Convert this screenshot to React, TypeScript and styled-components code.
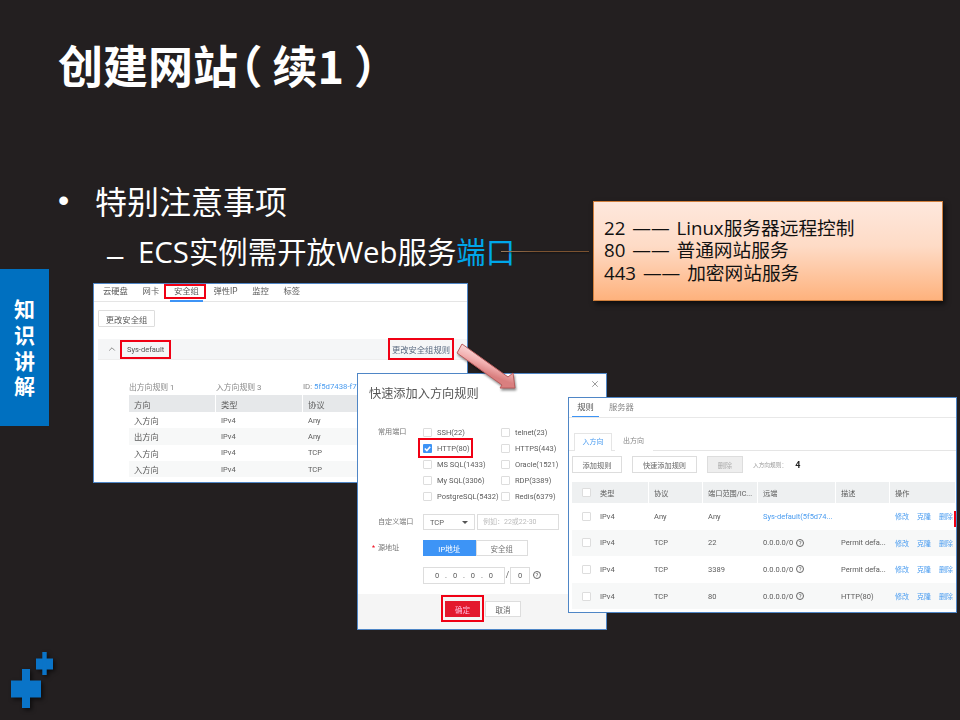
import styled, { createGlobalStyle } from "styled-components";
import { ChevronUp, X } from "lucide-react";

const GlobalStyle = createGlobalStyle`
  html, body {
    margin: 0;
    padding: 0;
    background: #231f20;
  }
`;

const ui = `"Roboto", "Noto Sans CJK SC", sans-serif`;
const red = "#f00014";

const tabsOne = ["云硬盘", "网卡", "安全组", "弹性IP", "监控", "标签"];
const rulesOne = [
  ["入方向", "IPv4", "Any"],
  ["出方向", "IPv4", "Any"],
  ["入方向", "IPv4", "TCP"],
  ["入方向", "IPv4", "TCP"],
];
const ports = [
  ["SSH(22)", "telnet(23)"],
  ["HTTP(80)", "HTTPS(443)"],
  ["MS SQL(1433)", "Oracle(1521)"],
  ["My SQL(3306)", "RDP(3389)"],
  ["PostgreSQL(5432)", "Redis(6379)"],
];
const rulesTwo = [
  { proto: "Any", port: "Any", remote: "Sys-default(5f5d74...", desc: "" },
  { proto: "TCP", port: "22", remote: "0.0.0.0/0", desc: "Permit defa..." },
  { proto: "TCP", port: "3389", remote: "0.0.0.0/0", desc: "Permit defa..." },
  { proto: "TCP", port: "80", remote: "0.0.0.0/0", desc: "HTTP(80)" },
];

const App = () => {
  return (
    <Stage>
      <GlobalStyle />
      <Title>
        创建网站<OpenParen>（</OpenParen>续1<CloseParen>）</CloseParen>
      </Title>
      <Bullet>特别注意事项</Bullet>
      <SubBullet>
        ECS实例需开放Web服务<Accent>端口</Accent>
      </SubBullet>

      <SideTab>知识讲解</SideTab>

      <Connector />
      <Callout>
        <div>22 —— Linux服务器远程控制</div>
        <div>80 —— 普通网站服务</div>
        <div>443 —— 加密网站服务</div>
      </Callout>

      <WindowOne>
        <TabBarOne>
          {tabsOne.map((tab) => (
            <TabOne key={tab} $active={tab === "安全组"}>
              {tab}
            </TabOne>
          ))}
        </TabBarOne>
        <ChangeButton>更改安全组</ChangeButton>
        <GroupHead>
          <ChevronUp size={10} color="#777" />
          <GroupName>Sys-default</GroupName>
          <GroupLink>更改安全组规则</GroupLink>
        </GroupHead>
        <Stats>
          <span>出方向规则 1</span>
          <span>入方向规则 3</span>
          <span>
            ID: <LinkText>5f5d7438-f7e</LinkText>
          </span>
        </Stats>
        <TableOne>
          <HeadCell>方向</HeadCell>
          <HeadCell>类型</HeadCell>
          <HeadCell>协议</HeadCell>
          {rulesOne.map((row, i) =>
            row.map((cell, j) => (
              <BodyCell key={`${i}-${j}`} $alt={i % 2 === 1} $latin={j > 0}>
                {cell}
              </BodyCell>
            ))
          )}
        </TableOne>
      </WindowOne>

      <Arrow viewBox="0 0 64 50" width="64" height="50">
        <defs>
          <linearGradient id="arrowFill" x1="0.55" y1="0.2" x2="0.35" y2="0.6">
            <stop offset="0" stopColor="#fbdede" />
            <stop offset="0.55" stopColor="#f2b0b0" />
            <stop offset="1" stopColor="#d97f7f" />
          </linearGradient>
        </defs>
        <polygon
          points="7,1 2,10 47,42 45,45 60,45 58,30 53,34"
          fill="url(#arrowFill)"
          stroke="#b85c5c"
          strokeWidth="1"
        />
      </Arrow>

      <WindowTwo>
        <DialogTitle>快速添加入方向规则</DialogTitle>
        <CloseIcon>
          <X size={10} color="#888" />
        </CloseIcon>
        <PortGroup>
          <FormLabel>常用端口</FormLabel>
          <PortGrid>
            {ports.flat().map((port) => (
              <PortItem key={port} $marked={port === "HTTP(80)"}>
                <CheckBox $checked={port === "HTTP(80)"}>
                  {port === "HTTP(80)" && (
                    <svg viewBox="0 0 10 10" width="9" height="9">
                      <path d="M2 5 L4.3 7.2 L8 3" fill="none" stroke="#fff" strokeWidth="1.8" />
                    </svg>
                  )}
                </CheckBox>
                {port}
              </PortItem>
            ))}
          </PortGrid>
        </PortGroup>
        <FormRow $top={10}>
          <FormLabel>自定义端口</FormLabel>
          <SelectBox>
            TCP
            <Caret />
          </SelectBox>
          <HintInput>例如：22或22-30</HintInput>
        </FormRow>
        <FormRow $top={10}>
          <FormLabel $required>源地址</FormLabel>
          <Segment $on>IP地址</Segment>
          <Segment>安全组</Segment>
        </FormRow>
        <FormRow $top={11}>
          <FormLabel />
          <IpBox>0 . 0 . 0 . 0</IpBox>
          <Slash>/</Slash>
          <MaskBox>0</MaskBox>
          <Help>?</Help>
        </FormRow>
        <DialogFooter>
          <ConfirmMark>
            <ConfirmButton>确定</ConfirmButton>
          </ConfirmMark>
          <CancelButton>取消</CancelButton>
        </DialogFooter>
      </WindowTwo>

      <WindowThree>
        <TabBarThree>
          <TabThree $active>规则</TabThree>
          <TabThree>服务器</TabThree>
        </TabBarThree>
        <SubTabs>
          <SubTab $active>入方向</SubTab>
          <SubTab>出方向</SubTab>
        </SubTabs>
        <Toolbar>
          <ToolButton $width={50}>添加规则</ToolButton>
          <ToolButton $width={65}>快速添加规则</ToolButton>
          <ToolButton $width={36} $disabled>
            删除
          </ToolButton>
          <RuleCount>入方向规则：</RuleCount>
          <RuleNumber>4</RuleNumber>
        </Toolbar>
        <TableThree>
          <ThreeHead>
            <CheckBox />
          </ThreeHead>
          <ThreeHead>类型</ThreeHead>
          <ThreeHead>协议</ThreeHead>
          <ThreeHead>端口范围/IC...</ThreeHead>
          <ThreeHead>远端</ThreeHead>
          <ThreeHead>描述</ThreeHead>
          <ThreeHead>操作</ThreeHead>
          {rulesTwo.map((rule, i) => (
            <ThreeRow key={i} $alt={i % 2 === 1}>
              <ThreeCell>
                <CheckBox />
              </ThreeCell>
              <ThreeCell>IPv4</ThreeCell>
              <ThreeCell>{rule.proto}</ThreeCell>
              <ThreeCell>{rule.port}</ThreeCell>
              <ThreeCell>
                {i === 0 ? (
                  <LinkText>{rule.remote}</LinkText>
                ) : (
                  <>
                    {rule.remote}
                    <Help>?</Help>
                  </>
                )}
              </ThreeCell>
              <ThreeCell>{rule.desc}</ThreeCell>
              <ThreeCell>
                <Ops>
                  <LinkText>修改</LinkText>
                  <LinkText>克隆</LinkText>
                  <LinkText>删除</LinkText>
                </Ops>
              </ThreeCell>
            </ThreeRow>
          ))}
        </TableThree>
        <RedMark />
      </WindowThree>

      <Logo viewBox="0 0 60 70" width="60" height="70">
        <g fill="#0a74c8">
          <rect x="11" y="28.5" width="30" height="17" />
          <rect x="22" y="17" width="8" height="39" />
          <rect x="36" y="6.5" width="17" height="11" />
          <rect x="42.3" y="0" width="4.4" height="23" />
        </g>
      </Logo>
    </Stage>
  );
};

export default App;

const Stage = styled("div")`
  position: relative;
  width: 960px;
  height: 720px;
  overflow: hidden;
  background: #231f20;
  color: #fff;
  font-family: "Noto Sans CJK SC", sans-serif;
`;

const Title = styled("h1")`
  margin: 0;
  padding: 33px 0 0 58px;
  font-size: 45px;
  line-height: 64px;
  font-weight: 700;
  white-space: nowrap;
`;

// palt trims the blank half of the full-width bracket
const OpenParen = styled("span")`
  font-feature-settings: "palt";
  margin-right: 12px;
`;

const CloseParen = styled("span")`
  font-feature-settings: "palt";
  margin-left: 12px;
`;

const Bullet = styled("div")`
  position: relative;
  margin: 80px 0 0 95px;
  font-size: 32px;
  line-height: 46px;
  &::before {
    content: "•";
    position: absolute;
    left: -37px;
    top: 0;
    font-family: "Liberation Sans", sans-serif;
  }
`;

const SubBullet = styled("div")`
  position: relative;
  margin: 7px 0 0 138px;
  font-family: "Open Sans", "Noto Sans CJK SC", sans-serif;
  font-size: 29.4px;
  line-height: 40px;
  white-space: nowrap;
  &::before {
    content: "–";
    position: absolute;
    left: -31px;
    top: 6px;
    font-family: "Liberation Sans", sans-serif;
  }
`;

const Accent = styled("span")`
  color: #00a7ea;
  font-family: "Noto Sans CJK SC", sans-serif;
`;

const SideTab = styled("div")`
  position: absolute;
  left: 0;
  top: 269px;
  width: 49px;
  height: 157px;
  box-sizing: border-box;
  padding-top: 6px;
  background: #0070c0;
  display: flex;
  align-items: center;
  justify-content: center;
  writing-mode: vertical-rl;
  text-orientation: upright;
  font-size: 21px;
  letter-spacing: 4.6px;
  font-weight: 700;
`;

const Connector = styled("div")`
  position: absolute;
  left: 501px;
  top: 251px;
  width: 88px;
  height: 1px;
  background: linear-gradient(90deg, #9a7a5c, #7b5230 40%, #7b5230);
  box-shadow: 0 1px 2px rgba(0, 0, 0, 0.6);
`;

const Callout = styled("div")`
  position: absolute;
  left: 593px;
  top: 201px;
  width: 350px;
  height: 100px;
  box-sizing: border-box;
  padding: 14.5px 0 0 10px;
  border: 1px solid #d07f3c;
  background: linear-gradient(180deg, #fee8dd 0%, #fedbc6 45%, #feb27d 100%);
  box-shadow: 2px 3px 5px rgba(0, 0, 0, 0.6);
  color: #111;
  font-family: "Open Sans", "Noto Sans CJK SC", sans-serif;
  font-size: 18.7px;
  line-height: 22.5px;
  word-spacing: 2px;
  white-space: nowrap;
`;

const Window = styled("div")`
  position: absolute;
  box-sizing: border-box;
  background: #fff;
  border: 1px solid #4f86c6;
  overflow: hidden;
  color: #5c5c5c;
  font-family: ${ui};
  font-size: 8.3px;
  white-space: nowrap;
  filter: blur(0.3px);
`;

const WindowOne = styled(Window)`
  left: 93px;
  top: 283px;
  width: 375px;
  height: 200px;
`;

const TabBarOne = styled("div")`
  display: flex;
  gap: 14.7px;
  padding: 2px 0 0 9px;
  height: 15px;
  align-items: flex-start;
  border-bottom: 1px solid #e5e5e5;
`;

const TabOne = styled("div")<{ $active?: boolean }>`
  position: relative;
  line-height: 11px;
  &::after {
    content: ${(p) => (p.$active ? '""' : "none")};
    position: absolute;
    left: -8px;
    right: -5px;
    top: 0;
    bottom: 0;
    outline: 2px solid ${red};
  }
  &::before {
    content: ${(p) => (p.$active ? '""' : "none")};
    position: absolute;
    left: -4px;
    right: -4px;
    top: 14px;
    height: 1.5px;
    background: #3d94f6;
  }
`;

const ChangeButton = styled("div")`
  width: 57px;
  height: 17px;
  box-sizing: border-box;
  margin: 8px 0 12px 4px;
  border: 1px solid #ddd;
  border-radius: 1px;
  display: flex;
  align-items: center;
  justify-content: center;
`;

const GroupHead = styled("div")`
  display: flex;
  align-items: center;
  height: 20px;
  margin-left: 4px;
  padding: 0 15px 0 9px;
  background: #f5f6f7;
  border-bottom: 1px solid #eee;
`;

const GroupName = styled("span")`
  margin-left: 5px;
  padding: 3px 5px;
  outline: 2px solid ${red};
  color: #555;
  font-size: 7.5px;
`;

const GroupLink = styled("span")`
  margin-left: auto;
  padding: 3px 2px;
  outline: 2px solid ${red};
  color: #5a6a80;
`;

const Stats = styled("div")`
  display: grid;
  grid-template-columns: 87px 87px 1fr;
  margin: 20px 0 3px 35px;
  height: 12px;
  align-items: center;
  color: #888;
  font-size: 7.8px;
`;

const LinkText = styled("span")`
  color: #4a9cf0;
`;

const TableOne = styled("div")`
  display: grid;
  grid-template-columns: 87px 87px 1fr;
  grid-template-rows: 17px repeat(4, 16.3px);
  margin-left: 35px;
`;

const HeadCell = styled("div")`
  display: flex;
  align-items: center;
  padding-left: 5px;
  background: #e6e8ea;
  border-right: 1px solid #fff;
`;

const BodyCell = styled("div")<{ $alt: boolean; $latin: boolean }>`
  display: flex;
  align-items: center;
  padding-left: 5px;
  font-size: ${(p) => (p.$latin ? "7.5px" : "8.3px")};
  background: ${(p) => (p.$alt ? "#f7f8f8" : "#fff")};
`;

const Arrow = styled("svg")`
  position: absolute;
  left: 455px;
  top: 343px;
  z-index: 3;
  filter: drop-shadow(1px 2px 1px rgba(0, 0, 0, 0.45));
`;

const WindowTwo = styled(Window)`
  left: 357px;
  top: 373px;
  width: 250px;
  height: 257px;
  display: flex;
  flex-direction: column;
  z-index: 2;
`;

const DialogTitle = styled("div")`
  margin: 11px 0 0 11px;
  height: 18px;
  line-height: 18px;
  font-size: 12.2px;
  color: #555;
`;

const CloseIcon = styled("div")`
  position: absolute;
  right: 6px;
  top: 5px;
  display: flex;
`;

const PortGroup = styled("div")`
  display: flex;
  margin: 21px 0 0 20px;
`;

const FormLabel = styled("div")<{ $required?: boolean }>`
  position: relative;
  flex: none;
  width: 45px;
  height: 16px;
  line-height: 16px;
  color: #777;
  font-size: 7.1px;
  &::before {
    content: ${(p) => (p.$required ? '"*"' : "none")};
    position: absolute;
    left: -6px;
    color: ${red};
  }
`;

const PortGrid = styled("div")`
  display: grid;
  grid-template-columns: 78px 1fr;
  grid-auto-rows: 16px;
  font-size: 7.5px;
`;

const PortItem = styled("div")<{ $marked: boolean }>`
  position: relative;
  display: flex;
  align-items: center;
  gap: 5px;
  &::after {
    content: ${(p) => (p.$marked ? '""' : "none")};
    position: absolute;
    left: -3px;
    width: 51px;
    top: 0;
    bottom: 0;
    outline: 2px solid ${red};
  }
`;

const CheckBox = styled("span")<{ $checked?: boolean }>`
  flex: none;
  width: 9px;
  height: 9px;
  box-sizing: border-box;
  display: inline-flex;
  align-items: center;
  justify-content: center;
  border: ${(p) => (p.$checked ? "0" : "1px solid #ddd")};
  border-radius: 1px;
  background: ${(p) => (p.$checked ? "#3d94f6" : "#fff")};
`;

const FormRow = styled("div")<{ $top: number }>`
  display: flex;
  align-items: center;
  height: 16px;
  margin: ${(p) => p.$top}px 0 0 20px;
`;

const SelectBox = styled("div")`
  width: 52px;
  height: 16px;
  box-sizing: border-box;
  display: flex;
  align-items: center;
  justify-content: space-between;
  padding: 0 6px;
  border: 1px solid #ddd;
  font-size: 7.5px;
`;

const Caret = styled("i")`
  width: 0;
  height: 0;
  border: 3px solid transparent;
  border-top-color: #555;
  border-bottom: 0;
`;

const HintInput = styled("div")`
  width: 82px;
  height: 16px;
  box-sizing: border-box;
  margin-left: 2px;
  padding-left: 5px;
  line-height: 14px;
  border: 1px solid #ddd;
  color: #bbb;
  font-size: 7px;
`;

const Segment = styled("div")<{ $on?: boolean }>`
  width: 52.5px;
  height: 16px;
  box-sizing: border-box;
  display: flex;
  align-items: center;
  justify-content: center;
  border: 1px solid ${(p) => (p.$on ? "#3d94f6" : "#ddd")};
  background: ${(p) => (p.$on ? "#3d94f6" : "#fff")};
  color: ${(p) => (p.$on ? "#fff" : "#777")};
  font-size: 7.5px;
`;

const IpBox = styled("div")`
  width: 82px;
  height: 17px;
  box-sizing: border-box;
  display: flex;
  align-items: center;
  justify-content: center;
  border: 1px solid #ddd;
  word-spacing: 4px;
  font-size: 7.5px;
`;

const Slash = styled("span")`
  width: 5px;
  text-align: center;
`;

const MaskBox = styled(IpBox)`
  width: 20px;
`;

const Help = styled("span")`
  flex: none;
  display: inline-flex;
  align-items: center;
  justify-content: center;
  width: 8px;
  height: 8px;
  box-sizing: border-box;
  margin-left: 3px;
  border: 1px solid #666;
  border-radius: 50%;
  font-size: 6px;
  line-height: 1;
`;

const DialogFooter = styled("div")`
  margin-top: auto;
  height: 28px;
  display: flex;
  align-items: flex-start;
  padding: 7px 0 0 85px;
  gap: 3px;
  background: #f5f5f5;
`;

const ConfirmMark = styled("div")`
  margin-top: -4px;
  padding: 4px 2px 3px;
  outline: 2px solid ${red};
  display: flex;
`;

const ConfirmButton = styled("div")`
  width: 35px;
  height: 16px;
  display: flex;
  align-items: center;
  justify-content: center;
  background: #e3182d;
  color: #fbd;
  font-size: 7.5px;
`;

const CancelButton = styled("div")`
  width: 36px;
  height: 16px;
  box-sizing: border-box;
  display: flex;
  align-items: center;
  justify-content: center;
  background: #fff;
  border: 1px solid #ddd;
  font-size: 7.5px;
`;

const WindowThree = styled(Window)`
  left: 568px;
  top: 397px;
  width: 389px;
  height: 216px;
  z-index: 4;
`;

const TabBarThree = styled("div")`
  display: flex;
  height: 19px;
  padding-left: 3px;
  border-bottom: 1px solid #e8e8e8;
`;

const TabThree = styled("div")<{ $active?: boolean }>`
  width: ${(p) => (p.$active ? "27px" : "auto")};
  margin-right: 10px;
  text-align: center;
  line-height: 18px;
  color: ${(p) => (p.$active ? "#555" : "#888")};
  border-bottom: ${(p) => (p.$active ? "1.5px solid #3d94f6" : "0")};
  height: 18px;
`;

const SubTabs = styled("div")`
  display: flex;
  height: 17px;
  margin-top: 15px;
  padding-left: 5px;
  border-bottom: 1px solid #e5e5e5;
`;

const SubTab = styled("div")<{ $active?: boolean }>`
  width: 38px;
  height: 18px;
  box-sizing: border-box;
  margin-right: 2.5px;
  line-height: 17px;
  text-align: center;
  font-size: 7px;
  color: ${(p) => (p.$active ? "#4a9cf0" : "#888")};
  background: #fff;
  ${(p) => p.$active && "border: 1px solid #e5e5e5; border-bottom: 0;"}
`;

const Toolbar = styled("div")`
  display: flex;
  align-items: center;
  gap: 10px;
  height: 17px;
  margin: 5px 0 9px 3px;
  font-size: 7.2px;
`;

const ToolButton = styled("div")<{ $width: number; $disabled?: boolean }>`
  width: ${(p) => p.$width}px;
  height: 17px;
  box-sizing: border-box;
  display: flex;
  align-items: center;
  justify-content: center;
  border: 1px solid #ddd;
  background: ${(p) => (p.$disabled ? "#eee" : "#fff")};
  color: ${(p) => (p.$disabled ? "#aaa" : "#666")};
`;

const RuleCount = styled("span")`
  font-size: 5.7px;
  color: #999;
`;

const RuleNumber = styled("span")`
  margin-left: -2px;
  font-size: 9px;
  font-weight: 700;
  color: #222;
`;

const TableThree = styled("div")`
  display: grid;
  grid-template-columns: 28px 49px 54px 55px 78px 54px 1fr;
  grid-template-rows: 21px repeat(4, 26.6px);
  margin-left: 3px;
`;

const ThreeHead = styled("div")`
  display: flex;
  align-items: center;
  padding-left: 5px;
  background: #eef0f1;
  border-right: 1px solid #fff;
  font-size: 7.2px;
  &:first-child {
    padding-left: 10px;
    border-right: 0;
  }
  &:nth-child(2) {
    padding-left: 0;
  }
`;

const ThreeRow = styled("div")<{ $alt: boolean }>`
  display: contents;
  & > div {
    background: ${(p) => (p.$alt ? "#f7f8f8" : "#fff")};
  }
`;

const ThreeCell = styled("div")`
  display: flex;
  align-items: center;
  padding-left: 5px;
  font-size: 7.5px;
  &:first-child {
    padding-left: 10px;
  }
  &:nth-child(2) {
    padding-left: 0;
  }
`;

const Ops = styled("div")`
  display: flex;
  gap: 8px;
  font-size: 7px;
`;

const RedMark = styled("div")`
  position: absolute;
  right: 0;
  top: 113px;
  width: 2px;
  height: 16px;
  background: ${red};
`;

const Logo = styled("svg")`
  position: absolute;
  left: 0;
  top: 652px;
  filter: drop-shadow(2px 2px 2px rgba(0, 0, 0, 0.6));
`;
